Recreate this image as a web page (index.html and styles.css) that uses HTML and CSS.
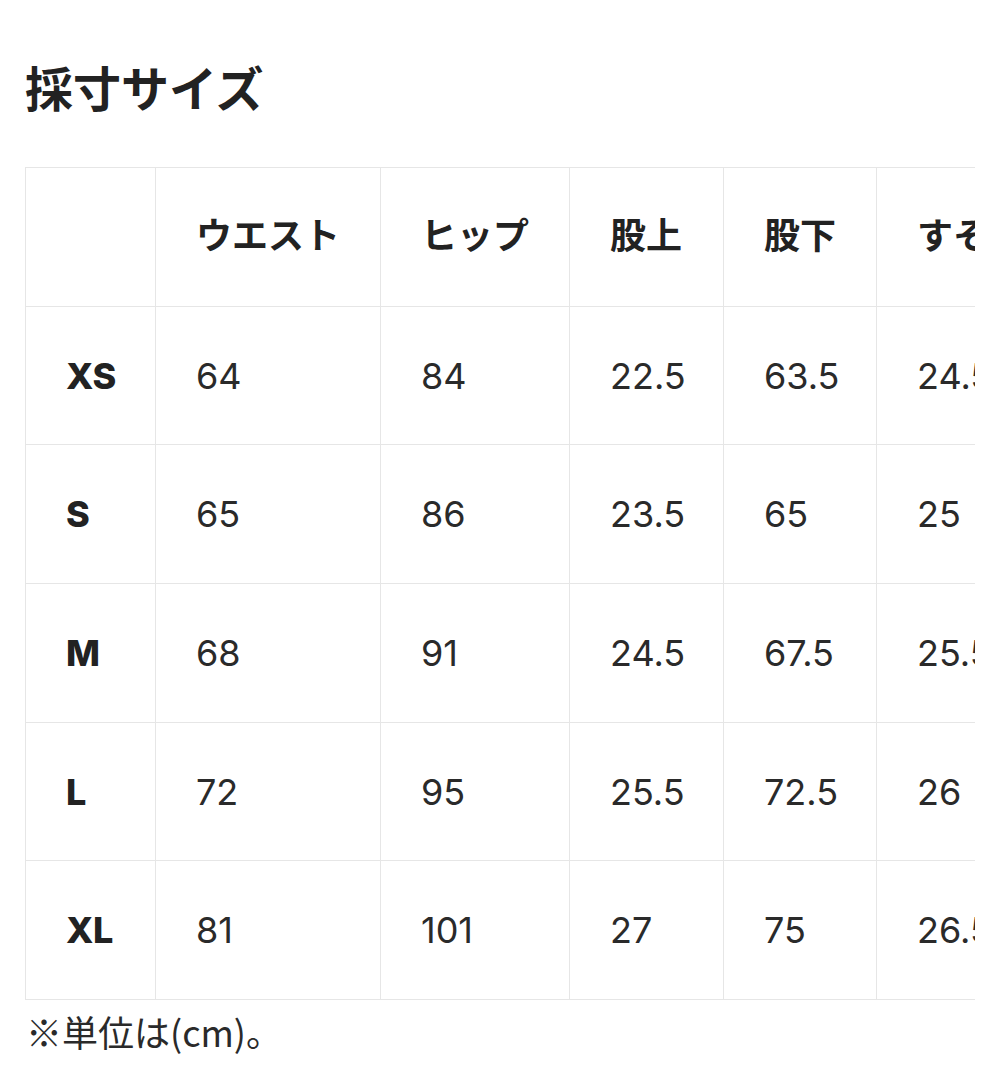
FILE: index.html
```html
<!DOCTYPE html>
<html lang="ja">
<head>
<meta charset="utf-8">
<link rel="stylesheet" href="styles.css">
</head>
<body>
<main class="page">
  <h1 class="title">採寸サイズ</h1>
  <div class="table-wrap">
    <table class="size-table">
      <colgroup>
        <col class="c1"><col class="c2"><col class="c3"><col class="c4"><col class="c5"><col class="c6">
      </colgroup>
      <thead>
        <tr><th></th><th>ウエスト</th><th>ヒップ</th><th>股上</th><th>股下</th><th>すそ幅</th></tr>
      </thead>
      <tbody>
        <tr><th>XS</th><td>64</td><td>84</td><td>22.5</td><td>63.5</td><td>24.5</td></tr>
        <tr><th>S</th><td>65</td><td>86</td><td>23.5</td><td>65</td><td>25</td></tr>
        <tr><th>M</th><td>68</td><td>91</td><td>24.5</td><td>67.5</td><td>25.5</td></tr>
        <tr><th>L</th><td>72</td><td>95</td><td>25.5</td><td>72.5</td><td>26</td></tr>
        <tr><th>XL</th><td>81</td><td>101</td><td>27</td><td>75</td><td>26.5</td></tr>
      </tbody>
    </table>
  </div>
  <p class="note">※単位は(cm)。</p>
</main>
</body>
</html>
```
FILE: styles.css
```css
html, body {
  margin: 0;
  padding: 0;
  background: #ffffff;
}
body {
  font-family: "Inter", "Noto Sans CJK JP", sans-serif;
  color: #222222;
}
.page {
  padding: 62px 0 0 25px;
}
.title {
  margin: 0;
  font-family: "Noto Sans CJK JP", sans-serif;
  font-weight: 700;
  font-size: 48px;
  line-height: 48px;
  color: #222222;
}
.table-wrap {
  margin-top: 57px;
  width: 950px;
  overflow: hidden;
}
.size-table {
  border-collapse: collapse;
  table-layout: fixed;
  width: 1031px;
}
.c1 { width: 130px; }
.c2 { width: 225px; }
.c3 { width: 189px; }
.c4 { width: 154px; }
.c5 { width: 153px; }
.c6 { width: 180px; }
.size-table tr {
  height: 138.7px;
}
.size-table th,
.size-table td {
  border: 1px solid #e6e6e6;
  padding: 0 0 0 40px;
  text-align: left;
  vertical-align: middle;
  font-size: 36px;
  white-space: nowrap;
  overflow: hidden;
}
.size-table thead th {
  font-family: "Noto Sans CJK JP", sans-serif;
  font-weight: 700;
  font-size: 36px;
  padding-bottom: 8px;
}
.size-table tbody th {
  font-family: "Inter", sans-serif;
  font-weight: 800;
  font-size: 36px;
  letter-spacing: -0.5px;
}
.size-table td {
  font-weight: 400;
  color: #2a2a2a;
}
.note {
  margin: 6px 0 0 1px;
  font-size: 36px;
  line-height: 50px;
  font-family: "Noto Sans CJK JP", sans-serif;
  color: #2a2a2a;
}
```
